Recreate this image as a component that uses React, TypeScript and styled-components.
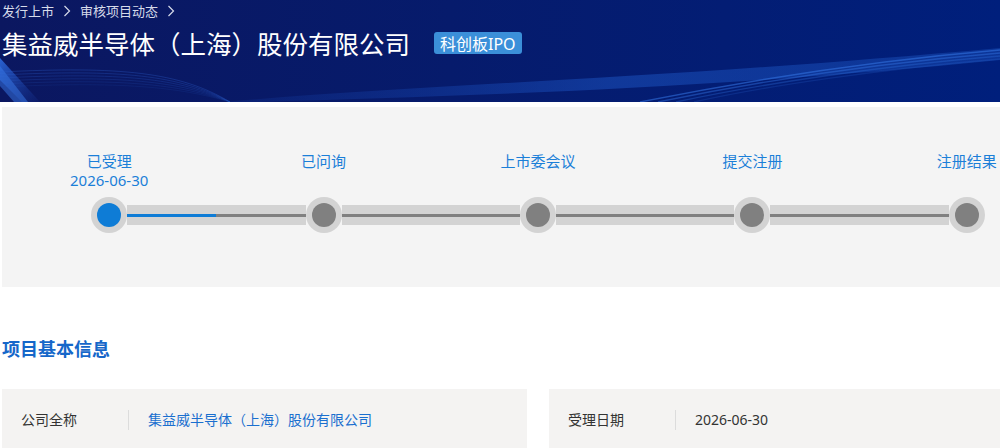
import styled, { createGlobalStyle } from 'styled-components'

const GlobalStyle = createGlobalStyle`
  html, body {
    margin: 0;
    padding: 0;
    overflow: hidden;
    background: #ffffff;
    font-family: "Noto Sans", "Noto Sans CJK SC", sans-serif;
  }
`

type Step = {
  name: string
  date?: string
}

const steps: Step[] = [
  { name: '已受理', date: '2026-06-30' },
  { name: '已问询' },
  { name: '上市委会议' },
  { name: '提交注册' },
  { name: '注册结果' }
]

const HeaderWaves = () => (
  <WaveSvg viewBox="0 0 1000 102" preserveAspectRatio="none">
    <defs>
      <linearGradient id="streak" x1="0" y1="0" x2="1" y2="1">
        <stop offset="0" stopColor="#2d6be0" stopOpacity="0.9" />
        <stop offset="1" stopColor="#1a3fa8" stopOpacity="0.1" />
      </linearGradient>
      <linearGradient id="band" x1="0" y1="0" x2="1" y2="0">
        <stop offset="0" stopColor="#1d56d0" stopOpacity="0.2" />
        <stop offset="0.5" stopColor="#2466dc" stopOpacity="0.7" />
        <stop offset="1" stopColor="#2a6ee0" stopOpacity="0.5" />
      </linearGradient>
    </defs>
    <path d="M0 58 L40 102 L22 102 L0 80 Z" fill="url(#streak)" />
    <path d="M0 66 L28 102 L14 102 L0 86 Z" fill="#3a7ae8" opacity="0.5" />
    {[0, 3, 6, 9, 12, 15].map((o) => (
      <path
        key={o}
        d={`M0 ${72 + o} C 120 ${66 + o}, 180 ${72 + o}, 230 ${102}`}
        stroke="#2a5cc8"
        strokeOpacity={0.35 - o * 0.015}
        strokeWidth="1"
        fill="none"
      />
    ))}
    <path
      d="M225 102 C 420 84, 650 80, 1000 48 L1000 60 C 700 90, 450 96, 260 102 Z"
      fill="url(#band)"
      opacity="0.55"
    />
    {[0, 3, 6, 9].map((o) => (
      <path
        key={o}
        d={`M${640 + o * 6} 102 C 760 ${78 + o}, 880 ${60 + o}, 1000 ${50 + o}`}
        stroke="#3576e6"
        strokeOpacity={0.55 - o * 0.04}
        strokeWidth="1.4"
        fill="none"
      />
    ))}
  </WaveSvg>
)

const Chevron = () => (
  <ChevronSvg viewBox="0 0 8 12" width="8" height="12">
    <path d="M1.5 1 L6.5 6 L1.5 11" stroke="#d6dbea" strokeWidth="1.2" fill="none" />
  </ChevronSvg>
)

const App = () => {
  return (
    <>
      <GlobalStyle />
      <Header>
        <HeaderWaves />
        <HeaderInner>
          <Breadcrumb>
            <Crumb>发行上市</Crumb>
            <Chevron />
            <Crumb>审核项目动态</Crumb>
            <Chevron />
          </Breadcrumb>
          <TitleRow>
            <Title>集益威半导体（上海）股份有限公司</Title>
            <Badge>科创板IPO</Badge>
          </TitleRow>
        </HeaderInner>
      </Header>

      <Content>
        <ProgressPanel>
          <Steps>
            {steps.map((s, i) => (
              <StepCol key={s.name}>
                <StepLabel>
                  <StepName>{s.name}</StepName>
                  {s.date && <StepDate>{s.date}</StepDate>}
                </StepLabel>
                <NodeRow>
                  <Segment hidden={i === 0} active={false} />
                  <Ring>
                    <Dot active={i === 0} />
                  </Ring>
                  <Segment hidden={i === steps.length - 1} active={i === 0} />
                </NodeRow>
              </StepCol>
            ))}
          </Steps>
        </ProgressPanel>

        <SectionTitle>项目基本信息</SectionTitle>

        <InfoGrid>
          <InfoCard>
            <InfoLabel>公司全称</InfoLabel>
            <InfoValue link>集益威半导体（上海）股份有限公司</InfoValue>
          </InfoCard>
          <InfoCard>
            <InfoLabel>受理日期</InfoLabel>
            <InfoValue link={false}>2026-06-30</InfoValue>
          </InfoCard>
        </InfoGrid>
      </Content>
    </>
  )
}

export default App

const Header = styled.header`
  position: relative;
  height: 102px;
  overflow: hidden;
  background: linear-gradient(90deg, #0b1760 0%, #061b6c 45%, #001f7c 100%);
`

const WaveSvg = styled.svg`
  position: absolute;
  inset: 0;
  width: 100%;
  height: 100%;
`

const HeaderInner = styled.div`
  position: relative;
  padding: 2px 0 0 2px;
  display: flex;
  flex-direction: column;
`

const Breadcrumb = styled.div`
  display: flex;
  align-items: center;
  gap: 9px;
  height: 18px;
  font-size: 13px;
  color: #d6dbea;
  font-family: "Noto Sans CJK SC", sans-serif;
`

const Crumb = styled.span`
  line-height: 18px;
`

const ChevronSvg = styled.svg`
  display: block;
  flex: none;
`

const TitleRow = styled.div`
  display: flex;
  align-items: center;
  gap: 24px;
  margin-top: 6px;
`

const Title = styled.h1`
  margin: 0;
  font-size: 25.5px;
  line-height: 34px;
  font-weight: 400;
  color: #ffffff;
  font-family: "Noto Sans CJK SC", sans-serif;
`

const Badge = styled.span`
  display: inline-flex;
  align-items: center;
  height: 22px;
  padding: 0 6px;
  border-radius: 3px;
  background: #3b8fd9;
  color: #ffffff;
  font-size: 16px;
  font-family: "Noto Sans", "Noto Sans CJK SC", sans-serif;
`

const Content = styled.main`
  width: 1072px;
  margin: 5px 0 0 2px;
`

const ProgressPanel = styled.section`
  height: 180px;
  background: #f4f4f4;
  padding-top: 44px;
  box-sizing: border-box;
`

const Steps = styled.div`
  display: grid;
  grid-template-columns: repeat(5, 1fr);
`

const StepCol = styled.div`
  display: flex;
  flex-direction: column;
  align-items: center;
`

const StepLabel = styled.div`
  height: 46px;
  display: flex;
  flex-direction: column;
  align-items: center;
  color: #1b7fd8;
  font-family: "Noto Sans", "Noto Sans CJK SC", sans-serif;
`

const StepName = styled.div`
  font-size: 15px;
  line-height: 20px;
`

const StepDate = styled.div`
  font-size: 15px;
  line-height: 18px;
`

const NodeRow = styled.div`
  width: 100%;
  height: 36px;
  display: flex;
  align-items: center;
`

const Segment = styled.div<{ hidden: boolean; active: boolean }>`
  flex: 1;
  height: 20px;
  display: flex;
  align-items: center;
  background: ${(p) => (p.hidden ? 'transparent' : '#d3d3d3')};

  &::after {
    content: '';
    flex: 1;
    height: 3px;
    background: ${(p) =>
      p.hidden ? 'transparent' : p.active ? '#0e7cd6' : '#808080'};
  }
`

const Ring = styled.div`
  width: 36px;
  height: 36px;
  border-radius: 50%;
  background: #d3d3d3;
  display: flex;
  align-items: center;
  justify-content: center;
  flex: none;
`

const Dot = styled.div<{ active: boolean }>`
  width: 24px;
  height: 24px;
  border-radius: 50%;
  background: ${(p) => (p.active ? '#0e7cd6' : '#808080')};
`

const SectionTitle = styled.h2`
  margin: 49px 0 0;
  font-size: 18px;
  line-height: 24px;
  font-weight: 700;
  color: #1667c9;
  font-family: "Noto Sans CJK SC", sans-serif;
`

const InfoGrid = styled.div`
  margin-top: 29px;
  display: grid;
  grid-template-columns: 1fr 1fr;
  gap: 22px;
`

const InfoCard = styled.div`
  display: flex;
  align-items: center;
  height: 62px;
  padding: 0 19px;
  background: #f4f3f2;
  font-size: 14px;
  font-family: "Noto Sans", "Noto Sans CJK SC", sans-serif;
`

const InfoLabel = styled.div`
  width: 107px;
  color: #333333;
  border-right: 1px solid #dcdcdc;
  line-height: 20px;
  margin-right: 19px;
  flex: none;
`

const InfoValue = styled.div<{ link: boolean }>`
  color: ${(p) => (p.link ? '#1a6fcf' : '#333333')};
  line-height: 20px;
`
